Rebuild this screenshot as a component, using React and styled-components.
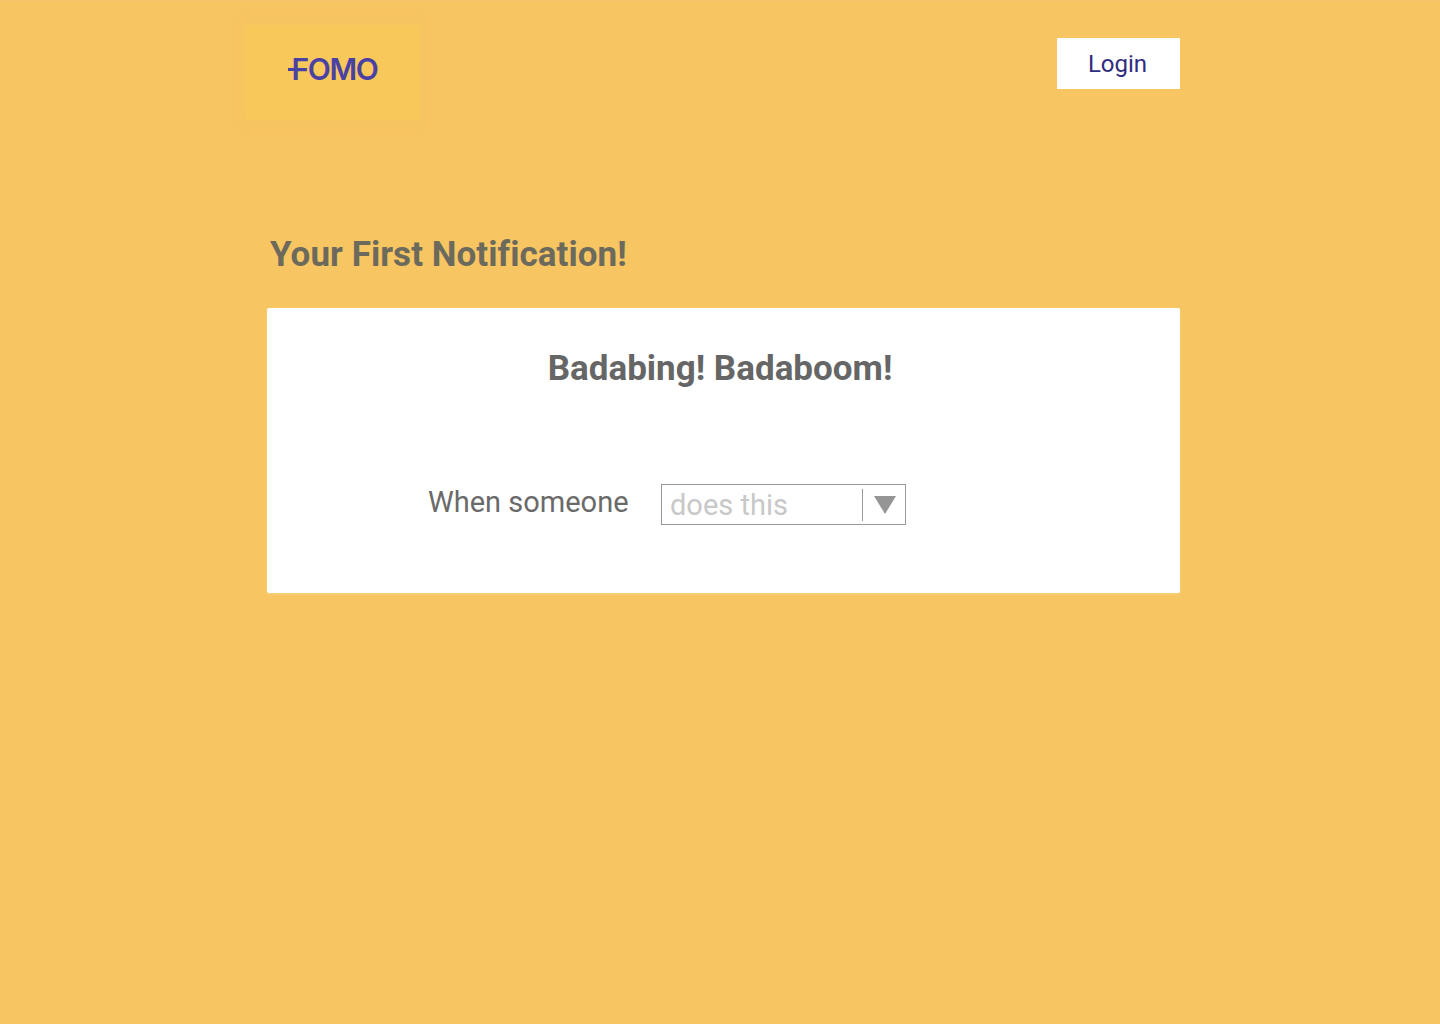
import React from "react";
import styled, { createGlobalStyle } from "styled-components";

const GlobalStyle = createGlobalStyle`
  html, body {
    margin: 0;
    padding: 0;
    min-height: 100%;
    background: #f7c562;
    font-family: Roboto, "Noto Sans", sans-serif;
  }
`;

const Page = styled.div`
  min-height: 1024px;
  box-sizing: border-box;
  border-top: 1px solid #f5c76e;
`;

const Container = styled.div`
  width: 913px;
  margin-left: 267px;
`;

const Header = styled.header`
  display: flex;
  justify-content: space-between;
  align-items: flex-start;
  padding-top: 24px;
`;

const LogoBox = styled.div`
  width: 175px;
  height: 95px;
  margin-left: -22px;
  display: flex;
  align-items: center;
  justify-content: center;
  padding-left: 4px;
  box-sizing: border-box;
  background: #f8c85b;
  box-shadow: 0 0 8px 2px rgba(248, 200, 91, 0.5);
`;

const LogoText = styled.span`
  position: relative;
  font-family: Inter, "Liberation Sans", sans-serif;
  font-size: 30px;
  line-height: 1;
  font-weight: 600;
  letter-spacing: -1.4px;
  color: #4a41a5;
  transform: translateY(-4px);

  &::before {
    content: "";
    position: absolute;
    left: -4px;
    top: 14px;
    width: 8px;
    height: 3px;
    background: #4a41a5;
  }
`;

const LoginButton = styled.button`
  width: 123px;
  height: 51px;
  margin-top: 13px;
  border: 0;
  padding: 0 2px 0 0;
  background: #fff;
  color: #2f2d7e;
  font-family: inherit;
  font-size: 24px;
  cursor: pointer;
`;

const Title = styled.h1`
  margin: 115px 0 0 3px;
  font-size: 35px;
  line-height: 40px;
  font-weight: 700;
  letter-spacing: 0.05px;
  color: #6c6a5c;
`;

const Card = styled.section`
  height: 285px;
  margin-top: 33px;
  box-sizing: border-box;
  padding-top: 40px;
  background: #fff;
  border-radius: 2px;
  box-shadow: 0 1px 3px rgba(255, 235, 190, 0.4);
`;

const CardTitle = styled.h2`
  margin: 0;
  padding-right: 7px;
  text-align: center;
  font-size: 35px;
  line-height: 42px;
  font-weight: 700;
  color: #666;
`;

const Sentence = styled.div`
  display: flex;
  align-items: flex-start;
  margin: 94px 0 0 161px;
  gap: 33px;
`;

const Label = styled.span`
  width: 200px;
  margin-top: -1px;
  white-space: nowrap;
  font-size: 29px;
  line-height: 38px;
  color: #6a6a6a;
`;

const Select = styled.div`
  display: flex;
  align-items: center;
  width: 245px;
  height: 41px;
  box-sizing: border-box;
  border: 1px solid #999;
`;

const Placeholder = styled.span`
  flex: 1;
  padding: 2px 0 0 8px;
  font-size: 29px;
  line-height: 39px;
  color: #c8c8c8;
`;

const Divider = styled.span`
  width: 1px;
  height: 32px;
  background: #999;
`;

const Arrow = styled.svg`
  width: 22px;
  height: 18px;
  margin: 0 9px 0 11px;
  fill: #959595;
`;

export default function App() {
  return (
    <Page>
      <GlobalStyle />
      <Container>
        <Header>
          <LogoBox>
            <LogoText>FOMO</LogoText>
          </LogoBox>
          <LoginButton>Login</LoginButton>
        </Header>
        <Title>Your First Notification!</Title>
        <Card>
          <CardTitle>Badabing! Badaboom!</CardTitle>
          <Sentence>
            <Label>When someone</Label>
            <Select>
              <Placeholder>does this</Placeholder>
              <Divider />
              <Arrow viewBox="0 0 22 18">
                <polygon points="0,0 22,0 11,18" />
              </Arrow>
            </Select>
          </Sentence>
        </Card>
      </Container>
    </Page>
  );
}
